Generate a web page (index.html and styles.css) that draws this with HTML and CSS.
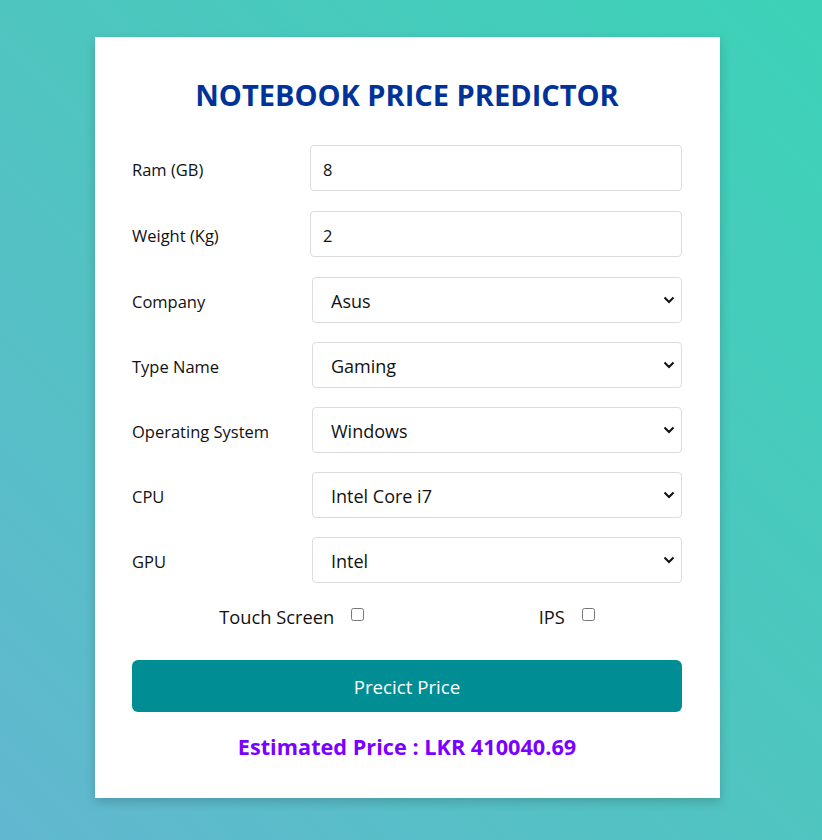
FILE: index.html
```html
<!DOCTYPE html>
<html lang="en">
<head>
<meta charset="utf-8">
<title>Notebook Price Predictor</title>
<link rel="stylesheet" href="styles.css">
</head>
<body>
<div class="card">
  <h1 class="title">NOTEBOOK PRICE PREDICTOR</h1>
  <form class="form">
    <div class="row">
      <label class="label">Ram (GB)</label>
      <input class="field" type="text" value="8">
    </div>
    <div class="row">
      <label class="label">Weight (Kg)</label>
      <input class="field" type="text" value="2">
    </div>
    <div class="row row-select">
      <label class="label">Company</label>
      <div class="select-wrap">
        <select class="select"><option>Asus</option></select>
        <svg class="chev" width="12" height="8" viewBox="0 0 12 8"><path d="M1.5 1.5 L6 6 L10.5 1.5" fill="none" stroke="#111" stroke-width="2"/></svg>
      </div>
    </div>
    <div class="row row-select">
      <label class="label">Type Name</label>
      <div class="select-wrap">
        <select class="select"><option>Gaming</option></select>
        <svg class="chev" width="12" height="8" viewBox="0 0 12 8"><path d="M1.5 1.5 L6 6 L10.5 1.5" fill="none" stroke="#111" stroke-width="2"/></svg>
      </div>
    </div>
    <div class="row row-select">
      <label class="label">Operating System</label>
      <div class="select-wrap">
        <select class="select"><option>Windows</option></select>
        <svg class="chev" width="12" height="8" viewBox="0 0 12 8"><path d="M1.5 1.5 L6 6 L10.5 1.5" fill="none" stroke="#111" stroke-width="2"/></svg>
      </div>
    </div>
    <div class="row row-select">
      <label class="label">CPU</label>
      <div class="select-wrap">
        <select class="select"><option>Intel Core i7</option></select>
        <svg class="chev" width="12" height="8" viewBox="0 0 12 8"><path d="M1.5 1.5 L6 6 L10.5 1.5" fill="none" stroke="#111" stroke-width="2"/></svg>
      </div>
    </div>
    <div class="row row-select">
      <label class="label">GPU</label>
      <div class="select-wrap">
        <select class="select"><option>Intel</option></select>
        <svg class="chev" width="12" height="8" viewBox="0 0 12 8"><path d="M1.5 1.5 L6 6 L10.5 1.5" fill="none" stroke="#111" stroke-width="2"/></svg>
      </div>
    </div>
    <div class="checks">
      <label class="check">Touch Screen <input class="box" type="checkbox"></label>
      <label class="check">IPS <input class="box" type="checkbox"></label>
    </div>
    <button class="btn" type="button">Precict Price</button>
  </form>
  <div class="result">Estimated Price : LKR 410040.69</div>
</div>
</body>
</html>
```
FILE: styles.css
```css
html, body {
  margin: 0;
  padding: 0;
}
body {
  min-height: 840px;
  background: linear-gradient(45deg, #62b7d0 0%, #4fc5c0 50%, #3cd2b7 100%);
  font-family: "Open Sans", "Noto Sans", sans-serif;
  color: #111;
  overflow: hidden;
}
.card {
  box-sizing: border-box;
  width: 625px;
  height: 761px;
  margin: 37px 0 0 95px;
  padding: 41px 38px 0 37px;
  background: #fff;
  box-shadow: 0 4px 10px rgba(0, 0, 0, 0.18);
}
.title {
  margin: 0 0 33px;
  font-size: 29px;
  line-height: 34px;
  font-weight: 700;
  text-align: center;
  color: #003399;
}
.form {
  display: flex;
  flex-direction: column;
}
.row {
  display: flex;
  align-items: center;
  height: 46px;
  margin-bottom: 20px;
}
.row-select {
  margin-bottom: 19px;
}
.label {
  width: 178px;
  flex: none;
  font-size: 16.5px;
  padding-top: 3px;
}
.field {
  flex: 1;
  box-sizing: border-box;
  height: 46px;
  border: 1px solid #dcdcdc;
  border-radius: 4px;
  padding: 3px 12px 0;
  font-family: inherit;
  font-size: 16.5px;
  color: #111;
  outline: none;
}
.select-wrap {
  position: relative;
  flex: 1;
  margin-left: 2px;
  height: 46px;
}
.select {
  -webkit-appearance: none;
  appearance: none;
  width: 100%;
  height: 46px;
  box-sizing: border-box;
  border: 1px solid #dcdcdc;
  border-radius: 4px;
  padding: 2px 30px 0 18px;
  background: #fff;
  font-family: inherit;
  font-size: 18px;
  color: #111;
}
.chev {
  position: absolute;
  right: 7px;
  top: 19px;
  pointer-events: none;
}
.checks {
  display: flex;
  justify-content: space-around;
  align-items: center;
  height: 30px;
  margin-top: -1px;
}
.check {
  display: flex;
  align-items: center;
  font-size: 18.3px;
}
.box {
  width: 13px;
  height: 13px;
  margin: 0 0 3px 17px;
}
.btn {
  margin-top: 29px;
  height: 52px;
  padding-top: 2px;
  border: none;
  border-radius: 6px;
  background: #008e94;
  color: #fff;
  font-family: inherit;
  font-size: 18.7px;
  cursor: pointer;
}
.result {
  margin-top: 20px;
  text-align: center;
  font-size: 21.7px;
  line-height: 30px;
  font-weight: 700;
  color: #7a00ff;
}
```
